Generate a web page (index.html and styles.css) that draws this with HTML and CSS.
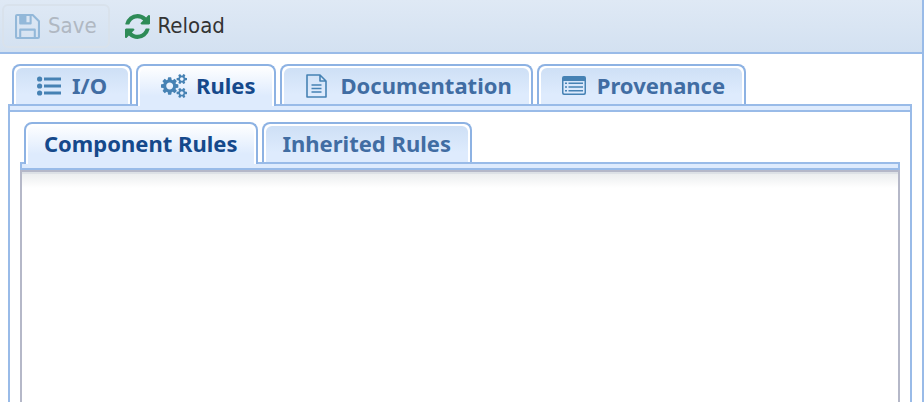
FILE: index.html
```html
<!DOCTYPE html>
<html lang="en">
<head>
<meta charset="utf-8">
<title>Component editor</title>
<link rel="stylesheet" href="styles.css">
</head>
<body>
<div class="window">
  <header class="toolbar">
    <button class="tool" type="button" disabled>
      <svg class="tool-icon" viewBox="0 0 24 24" fill="none" stroke="currentColor" stroke-width="2" stroke-linejoin="round" aria-hidden="true"><path d="M1 2Q1 1 2 1H17L23 7V22Q23 23 22 23H2Q1 23 1 22Z"/><path d="M5 1V9H15V1M5 23V15H19V23"/><path d="M5 1H11V9H5Z" fill="currentColor" stroke="none"/></svg>
      <span>Save</span>
    </button>
    <button class="tool" type="button">
      <svg class="tool-icon reload" viewBox="0 0 1536 1536" fill="currentColor" aria-hidden="true"><path d="M1511 928q0 5-1 7-64 268-268 434.500T764 1536q-146 0-282.500-55T238 1324l-129 129q-19 19-45 19t-45-19-19-45V960q0-26 19-45t45-19h448q26 0 45 19t19 45-19 45l-137 137q71 66 161 102t187 36q134 0 250-65t186-179q11-17 53-117 8-23 30-23h192q13 0 22.500 9.500t9.500 22.500zm25-800v448q0 26-19 45t-45 19h-448q-26 0-45-19t-19-45 19-45l138-138Q969 256 768 256q-134 0-250 65T332 500q-11 17-53 117-8 23-30 23H50q-13 0-22.500-9.500T18 608v-7q65-268 270-434.500T768 0q146 0 284 55.500T1297 212l130-129q19-19 45-19t45 19 19 45z"/></svg>
      <span>Reload</span>
    </button>
  </header>
  <main class="content">
    <div class="tabs" role="tablist">
      <button class="tab" type="button" role="tab" aria-selected="false">
        <svg class="tab-icon" viewBox="0 0 26 26" fill="currentColor" aria-hidden="true"><circle cx="2.600" cy="6" r="2.600"/><circle cx="2.600" cy="13" r="2.600"/><circle cx="2.600" cy="20" r="2.600"/><path d="M7 4.500h17v3H7zM7 11.500h17v3H7zM7 18.500h17v3H7z"/></svg>
        I/O
      </button>
      <button class="tab active" type="button" role="tab" aria-selected="true">
        <svg class="tab-icon" viewBox="0 0 1920 1792" fill="currentColor" aria-hidden="true"><path d="M896 896q0-106-75-181t-181-75-181 75-75 181 75 181 181 75 181-75 75-181zm768 512q0-52-38-90t-90-38-90 38-38 90q0 53 37.500 90.500t90.500 37.500 90.500-37.500 37.500-90.500zm0-1024q0-52-38-90t-90-38-90 38-38 90q0 53 37.500 90.500t90.500 37.500 90.500-37.500 37.500-90.500zm-384 421v185q0 10-7 19.500t-16 10.500l-155 24q-11 35-32 76 34 48 90 115 7 11 7 20 0 12-7 19-23 30-82.500 89.500t-78.500 59.500q-11 0-21-7l-115-90q-37 19-77 31-11 108-23 155-7 24-30 24h-186q-11 0-20-7.500t-10-17.500l-23-153q-34-10-75-31l-118 89q-7 7-20 7-11 0-21-8-144-133-144-160 0-9 7-19 10-14 41-53t47-61q-23-44-35-82l-152-24q-10-1-17-9.500t-7-19.500v-185q0-10 7-19.500t16-10.500l155-24q11-35 32-76-34-48-90-115-7-11-7-20 0-12 7-20 22-30 82-89t79-59q11 0 21 7l115 90q34-18 77-32 11-108 23-154 7-24 30-24h186q11 0 20 7.500t10 17.500l23 153q34 10 75 31l118-89q8-7 20-7 11 0 21 8 144 133 144 160 0 8-7 19-12 16-42 54t-45 60q23 48 34 82l152 23q10 2 17 10.500t7 19.500zm640 533v140q0 16-149 31-12 27-30 52 51 113 51 138 0 4-4 7-122 71-124 71-8 0-46-47t-52-68q-20 2-30 2t-30-2q-14 21-52 68t-46 47q-2 0-124-71-4-3-4-7 0-25 51-138-18-25-30-52-149-15-149-31v-140q0-16 149-31 13-29 30-52-51-113-51-138 0-4 4-7 4-2 35-20t59-34 30-16q8 0 46 46.500t52 67.500q20-2 30-2t30 2q51-71 92-112l6-2q4 0 124 70 4 3 4 7 0 25-51 138 17 23 30 52 149 15 149 31zm0-1024v140q0 16-149 31-12 27-30 52 51 113 51 138 0 4-4 7-122 71-124 71-8 0-46-47t-52-68q-20 2-30 2t-30-2q-14 21-52 68t-46 47q-2 0-124-71-4-3-4-7 0-25 51-138-18-25-30-52-149-15-149-31V314q0-16 149-31 13-29 30-52-51-113-51-138 0-4 4-7 4-2 35-20t59-34 30-16q8 0 46 46.500t52 67.500q20-2 30-2t30 2q51-71 92-112l6-2q4 0 124 70 4 3 4 7 0 25-51 138 17 23 30 52 149 15 149 31z"/></svg>
        Rules
      </button>
      <button class="tab" type="button" role="tab" aria-selected="false">
        <svg class="tab-icon" viewBox="0 0 26 26" fill="none" stroke="currentColor" stroke-width="1.600" stroke-linejoin="round" aria-hidden="true"><path d="M2 2H15L21 8V24H2Z M15 2V8H21"/><path d="M6.500 12H16.500M6.500 15.500H16.500M6.500 19H16.500"/></svg>
        Documentation
      </button>
      <button class="tab" type="button" role="tab" aria-selected="false">
        <svg class="tab-icon" viewBox="1 0 26 26" fill="currentColor" aria-hidden="true"><path fill-rule="evenodd" d="M3 3H23Q25 3 25 5V20Q25 22 23 22H3Q1 22 1 20V5Q1 3 3 3ZM2.500 8V19.500Q2.500 20.500 3.500 20.500H22.500Q23.500 20.500 23.500 19.500V8Z"/><path d="M4 9.500h2v1.600H4zM4 13.200h2v1.600H4zM4 17h2v1.600H4zM7.500 9.500h14.500v1.600H7.500zM7.500 13.200h14.500v1.600H7.500zM7.500 17h14.500v1.600H7.500z"/></svg>
        Provenance
      </button>
    </div>
    <section class="panel">
      <div class="tabs" role="tablist">
        <button class="tab active" type="button" role="tab" aria-selected="true">Component Rules</button>
        <button class="tab" type="button" role="tab" aria-selected="false">Inherited Rules</button>
      </div>
      <section class="panel-inner">
        <div class="editor"></div>
      </section>
    </section>
  </main>
</div>
</body>
</html>
```
FILE: styles.css
```css
*, *::before { box-sizing: border-box; }

body {
  margin: 0;
  background: #fff;
  font-family: "Noto Sans", sans-serif;
}

.window {
  display: flex;
  flex-direction: column;
  min-height: 100vh;
  border-right: 2px solid #99bbe8;
}

.toolbar {
  display: flex;
  align-items: center;
  gap: 2px;
  height: 54px;
  padding: 0 2px;
  border-bottom: 2px solid #99bbe8;
  background: linear-gradient(#dfe9f5, #d3e1f1);
}

.tool {
  display: flex;
  align-items: center;
  gap: 8px;
  height: 44px;
  padding: 0 11px;
  border: 2px solid transparent;
  border-radius: 6px;
  background: none;
  color: #333;
  font-family: "DejaVu Sans Condensed", "Noto Sans", sans-serif;
  font-size: 22px;
  line-height: 28px;
}

.tool:disabled {
  border-color: #d9e2ec;
  color: #b0b8c2;
}

.tool-icon {
  width: 25px;
  height: 25px;
  color: #93b8d9;
}

.reload { color: #2e8b57; }

.content {
  display: flex;
  flex: 1;
  flex-direction: column;
  padding: 10px 10px 0 8px;
}

.tabs {
  display: flex;
  align-items: flex-start;
  gap: 4px;
  padding: 0 4px;
}

.tab {
  display: flex;
  align-items: center;
  gap: 9px;
  min-width: 120px;
  height: 40px;
  padding: 0 19px 0 18px;
  border: 2px solid #8db2e3;
  border-bottom: 0;
  border-radius: 8px 8px 0 0;
  background: linear-gradient(#cddff5, #deebfd 75%);
  box-shadow: inset 2px 2px 0 #fff, inset -2px 2px 0 #fff;
  color: #416da3;
  font-family: inherit;
  font-size: 22px;
  font-weight: bold;
  line-height: 30px;
}

.tab:has(.tab-icon) { padding-left: 23px; }

.tab.active {
  z-index: 1;
  height: 42px;
  margin-bottom: -2px;
  padding-bottom: 2px;
  background: linear-gradient(#fff, #deebfd 75%);
  color: #15498b;
}

.tab-icon {
  width: 26px;
  height: 26px;
  margin-top: 2px;
  color: #4682b4;
}

.panel,
.panel-inner {
  display: flex;
  flex: 1;
  flex-direction: column;
}

.panel {
  padding: 10px;
  padding-bottom: 0;
  border: 2px solid #99bbe8;
  border-bottom: 0;
}

.panel::before,
.panel-inner::before {
  content: "";
  flex: none;
  height: 6px;
  border-bottom: 2px solid #99bbe8;
  background: #deebfd;
}

.panel::before { margin: -10px -10px 10px; }

.panel-inner::before {
  height: 8px;
  border: 2px solid #99bbe8;
}

.editor {
  flex: 1;
  border: 2px solid #b5b8c8;
  border-bottom: 0;
  background: linear-gradient(#dde1e6 2px, #eceeef 2px, #fff 16px);
}
```
